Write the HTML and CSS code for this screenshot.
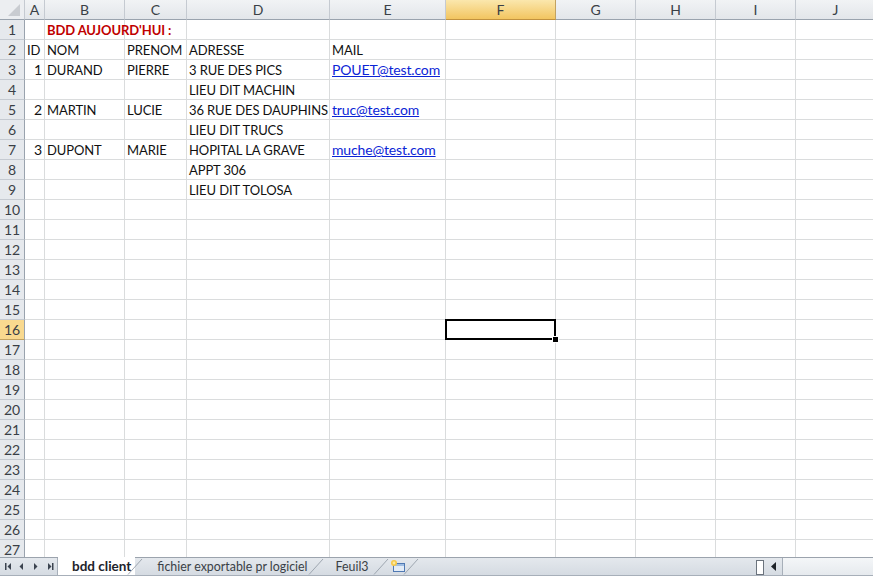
FILE: index.html
```html
<!DOCTYPE html>
<html>
<head>
<meta charset="utf-8">
<link rel="stylesheet" href="styles.css">
</head>
<body>
<div class="sheet">
  <div class="grid" id="grid">
    <div class="corner"><svg width="24" height="19" viewBox="0 0 24 19"><polygon points="20,4 20,16 8,16" fill="#c9ccd1"/></svg></div>
    <div class="ch">A</div><div class="ch">B</div><div class="ch">C</div><div class="ch">D</div><div class="ch">E</div><div class="ch sel">F</div><div class="ch">G</div><div class="ch">H</div><div class="ch">I</div><div class="ch">J</div>
  </div>
  <div class="selbox"><span class="handle"></span></div>
</div>
<div class="tabbar">
  <div class="nav">
    <svg width="56" height="17" viewBox="0 0 56 17">
      <rect x="5" y="5" width="1.5" height="7" fill="#3c4450"/>
      <polygon points="11,5 11,12 7.5,8.5" fill="#3c4450"/>
      <polygon points="23,5 23,12 19.5,8.5" fill="#3c4450"/>
      <polygon points="34,5 34,12 37.5,8.5" fill="#3c4450"/>
      <polygon points="48,5 48,12 51.5,8.5" fill="#3c4450"/>
      <rect x="52" y="5" width="1.5" height="7" fill="#3c4450"/>
    </svg>
  </div>
  <div class="tab active">bdd client</div>
  <svg class="slant" width="16" height="17" viewBox="0 0 16 17"><line x1="1" y1="16.5" x2="15" y2="1" stroke="#9ea6b0"/></svg>
  <div class="tab">fichier exportable pr logiciel</div>
  <svg class="slant" width="16" height="17" viewBox="0 0 16 17"><line x1="1" y1="16.5" x2="15" y2="1" stroke="#9ea6b0"/></svg>
  <div class="tab short">Feuil3</div>
  <svg class="slant" width="16" height="17" viewBox="0 0 16 17"><line x1="1" y1="16.5" x2="15" y2="1" stroke="#9ea6b0"/></svg>
  <div class="newtab">
    <svg width="20" height="17" viewBox="0 0 20 17">
      <rect x="4.5" y="5.5" width="11" height="8" fill="#e3ecf7" stroke="#4f79b3"/>
      <rect x="5" y="6" width="10" height="2" fill="#9fbde3"/>
      <circle cx="5" cy="5" r="3" fill="#f7c948"/>
      <circle cx="5" cy="5" r="1.4" fill="#fbe8a0"/>
    </svg>
  </div>
  <svg class="slant" width="16" height="17" viewBox="0 0 16 17"><line x1="1" y1="16.5" x2="15" y2="1" stroke="#9ea6b0"/></svg>
  <div class="fill"></div>
  <div class="split"></div>
  <div class="lscroll"><svg width="12" height="17" viewBox="0 0 12 17"><polygon points="8,4 8,13 3,8.5" fill="#1e2228"/></svg></div>
  <div class="track"></div>
</div>
<script src="app.js"></script>
</body>
</html>
```
FILE: app.js
```js
(function(){
  var g = document.getElementById('grid');
  var data = {
    1:{B:{t:"BDD AUJOURD'HUI :",c:"title"}},
    2:{A:{t:"ID"},B:{t:"NOM"},C:{t:"PRENOM"},D:{t:"ADRESSE"},E:{t:"MAIL"}},
    3:{A:{t:"1",c:"num"},B:{t:"DURAND"},C:{t:"PIERRE"},D:{t:"3 RUE DES PICS"},E:{t:"POUET@test.com",c:"link"}},
    4:{D:{t:"LIEU DIT MACHIN"}},
    5:{A:{t:"2",c:"num"},B:{t:"MARTIN"},C:{t:"LUCIE"},D:{t:"36 RUE DES DAUPHINS"},E:{t:"truc@test.com",c:"link"}},
    6:{D:{t:"LIEU DIT TRUCS"}},
    7:{A:{t:"3",c:"num"},B:{t:"DUPONT"},C:{t:"MARIE"},D:{t:"HOPITAL LA GRAVE"},E:{t:"muche@test.com",c:"link"}},
    8:{D:{t:"APPT 306"}},
    9:{D:{t:"LIEU DIT TOLOSA"}}
  };
  var cols = "ABCDEFGHIJ".split("");
  var html = "";
  for (var r = 1; r <= 28; r++) {
    html += '<div class="rh' + (r === 16 ? ' sel' : '') + '">' + r + '</div>';
    for (var i = 0; i < cols.length; i++) {
      var d = data[r] && data[r][cols[i]];
      if (d) {
        html += '<div class="cell ' + (d.c || '') + '"><span>' + d.t + '</span></div>';
      } else {
        html += '<div class="cell"></div>';
      }
    }
  }
  g.insertAdjacentHTML('beforeend', html);
})();
```
FILE: styles.css
```css
html, body {
  margin: 0;
  padding: 0;
  width: 873px;
  height: 577px;
  overflow: hidden;
  background: #fff;
  font-family: Lato, "Open Sans", sans-serif;
}
.sheet {
  position: relative;
  height: 557px;
  overflow: hidden;
}
.grid {
  display: grid;
  grid-template-columns: 25px 20px 80px 62px 143px 116px 110px 80px 80px 80px 80px;
  grid-template-rows: 20px;
  grid-auto-rows: 20px;
}
.corner {
  background: #eceef1;
  border-right: 1px solid #c5cad1;
  border-bottom: 1px solid #9aa3ae;
  box-sizing: border-box;
}
.corner svg { display: block; }
.ch {
  box-sizing: border-box;
  background: linear-gradient(#f1f3f5, #e3e6ea);
  border-right: 1px solid #c5cad1;
  border-bottom: 1px solid #9aa3ae;
  color: #3a3f46;
  font-size: 14px;
  text-align: center;
  line-height: 19px;
}
.ch.sel {
  background: linear-gradient(#fbe7ad, #f2c560);
  border-right-color: #c2a260;
  border-bottom-color: #c2923e;
}
.rh {
  box-sizing: border-box;
  background: #e6e9ed;
  border-right: 1px solid #9aa3ae;
  border-bottom: 1px solid #c5cad1;
  color: #3a3f46;
  font-size: 14px;
  text-align: center;
  line-height: 19px;
}
.rh.sel {
  background: #f9d98f;
  border-bottom-color: #c2a260;
}
.cell {
  box-sizing: border-box;
  border-right: 1px solid #dadcdd;
  border-bottom: 1px solid #dadcdd;
  font-size: 13px;
  letter-spacing: -0.1px;
  line-height: 20px;
  color: #111;
  padding-left: 2px;
  white-space: nowrap;
  overflow: visible;
  position: relative;
  z-index: 1;
}
.cell.num {
  text-align: right;
  padding-right: 2px;
  font-size: 14px;
}
.cell.title span {
  color: #c00000;
  font-weight: bold;
  position: relative;
  z-index: 2;
}
.cell.link {
  font-size: 14px;
  letter-spacing: -0.15px;
}
.cell.link span {
  color: #0b24d6;
  text-decoration: underline;
}
.selbox {
  position: absolute;
  left: 445px;
  top: 319px;
  width: 107px;
  height: 17px;
  border: 2px solid #000;
  z-index: 5;
}
.handle {
  position: absolute;
  right: -5px;
  bottom: -5px;
  width: 5px;
  height: 5px;
  background: #000;
  border: 1px solid #fff;
}
.tabbar {
  display: flex;
  align-items: stretch;
  height: 17px;
  background: linear-gradient(#e4e8ed, #d5dbe2);
  border-top: 1px solid #9ba3ad;
  border-bottom: 1px solid #a7afb9;
  font-size: 12.4px;
  color: #3a3f46;
}
.nav {
  width: 57px;
  border-right: 1px solid #a7afb9;
  flex: none;
}
.nav svg { display: block; }
.tab {
  padding: 0 8px 0 14px;
  line-height: 17px;
  white-space: nowrap;
  flex: none;
}
.tab.active {
  background: #fff;
  font-weight: bold;
  font-size: 13.5px;
  color: #1d232b;
  padding: 0 4px 0 14px;
  margin-top: -1px;
  line-height: 18px;
  height: 18px;
}
.tab.short { padding: 0 12px 0 12px; }
.slant { display: block; flex: none; margin-left: -8px; }
.newtab { flex: none; padding: 0 2px 0 0; }
.newtab svg { display: block; }
.fill { flex: 1; }
.split {
  flex: none;
  width: 6px;
  height: 13px;
  margin: 2px 4px 0 0;
  background: #fff;
  border: 1px solid #6b737d;
}
.lscroll { flex: none; width: 14px; }
.lscroll svg { display: block; }
.track {
  flex: none;
  width: 90px;
  background: linear-gradient(#f4f6f8, #e6eaee);
  border-left: 1px solid #a7afb9;
}
```
